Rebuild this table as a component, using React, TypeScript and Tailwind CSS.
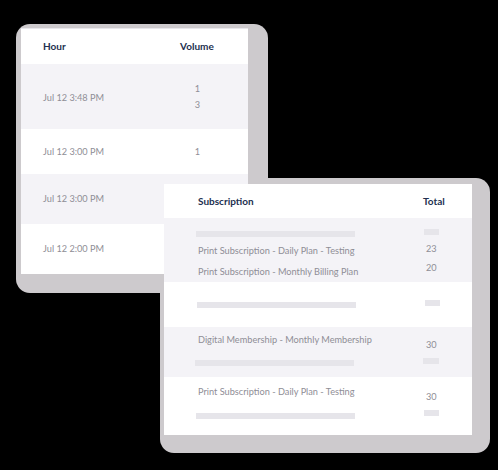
import React from 'react';

const hourRows = [
  { hour: 'Jul 12 3:48 PM', volume: ['1', '3'], h: 'h-[65px]', bg: 'bg-[#f4f3f7]' },
  { hour: 'Jul 12 3:00 PM', volume: ['1'], h: 'h-[45px]', bg: 'bg-white' },
  { hour: 'Jul 12 3:00 PM', volume: [], h: 'h-[50px]', bg: 'bg-[#f4f3f7]' },
  { hour: 'Jul 12 2:00 PM', volume: [], h: 'h-[50px]', bg: 'bg-white' },
];

function Bar({ className }: { className: string }) {
  return <div className={`h-[6px] bg-[#e6e5ea] ${className}`} />;
}

function HourCard() {
  return (
    <div className="absolute left-[21px] top-[28px] w-[227px] h-[245px] bg-white flex flex-col border-t border-[#e8e7ec]">
      <div className="h-[35px] shrink-0 grid grid-cols-[137px_1fr] items-center pl-[22px] text-[10px] font-bold text-[#222f4f]">
        <span>Hour</span>
        <span>Volume</span>
      </div>
      {hourRows.map((row, i) => (
        <div
          key={i}
          className={`${row.h} ${row.bg} shrink-0 grid grid-cols-[137px_36px] items-center pl-[22px] text-[9.2px] text-[#8f8e96]`}
        >
          <span className={i === 0 ? 'mt-[2px]' : ''}>{row.hour}</span>
          <div className="flex flex-col items-center -ml-[1px] leading-[16px]">
            {row.volume.map((v, j) => (
              <span key={j}>{v}</span>
            ))}
          </div>
        </div>
      ))}
    </div>
  );
}

function SubscriptionCard() {
  return (
    <div className="absolute left-[164px] top-[184px] w-[308px] h-[251px] bg-white flex flex-col text-[9.2px] text-[#8f8e96]">
      <div className="h-[34px] shrink-0 grid grid-cols-[227px_1fr] items-center pl-[34px] text-[10px] font-bold text-[#222f4f]">
        <span>Subscription</span>
        <span className="-ml-[2px]">Total</span>
      </div>

      <div className="h-[64px] shrink-0 bg-[#f4f3f7] grid grid-cols-[226px_1fr] pl-[34px]">
        <div className="flex flex-col pt-[13px]">
          <Bar className="w-[159px] -ml-[2px]" />
          <span className="mt-[4px] leading-[20px]">Print Subscription - Daily Plan - Testing</span>
          <span className="leading-[22px]">Print Subscription - Monthly Billing Plan</span>
        </div>
        <div className="flex flex-col pt-[11px]">
          <Bar className="w-[15px]" />
          <span className="mt-[4px] leading-[20px] pl-[2px]">23</span>
          <span className="leading-[18px] pl-[2px]">20</span>
        </div>
      </div>

      <div className="h-[45px] shrink-0 bg-white grid grid-cols-[226px_1fr] pl-[34px]">
        <div className="pt-[20px]">
          <Bar className="w-[159px] -ml-[1px]" />
        </div>
        <div className="pt-[18px]">
          <Bar className="w-[15px] ml-[1px]" />
        </div>
      </div>

      <div className="h-[50px] shrink-0 bg-[#f4f3f7] grid grid-cols-[226px_1fr] pl-[34px]">
        <div className="flex flex-col pt-[3px]">
          <span className="leading-[20px]">Digital Membership - Monthly Membership</span>
          <Bar className="w-[159px] -ml-[3px] mt-[10px]" />
        </div>
        <div className="flex flex-col pt-[8px]">
          <span className="leading-[20px] pl-[2px]">30</span>
          <Bar className="w-[16px] -ml-[1px] mt-[3px]" />
        </div>
      </div>

      <div className="h-[58px] shrink-0 bg-white grid grid-cols-[226px_1fr] pl-[34px]">
        <div className="flex flex-col pt-[5px]">
          <span className="leading-[20px]">Print Subscription - Daily Plan - Testing</span>
          <Bar className="w-[159px] -ml-[2px] mt-[11px]" />
        </div>
        <div className="flex flex-col pt-[10px]">
          <span className="leading-[20px] pl-[2px]">30</span>
          <Bar className="w-[15px] mt-[3px]" />
        </div>
      </div>
    </div>
  );
}

export default function App() {
  return (
    <div
      className="relative w-[498px] h-[470px] bg-black overflow-hidden"
      style={{ fontFamily: 'Lato, "Noto Sans", sans-serif' }}
    >
      <div className="absolute left-[160px] top-[178px] w-[330px] h-[275px] rounded-[14px] bg-[#cdcacd]" />
      <div className="absolute left-[16px] top-[24px] w-[252px] h-[269px] rounded-[14px] bg-[#cdcacd]" />
      <HourCard />
      <SubscriptionCard />
    </div>
  );
}
